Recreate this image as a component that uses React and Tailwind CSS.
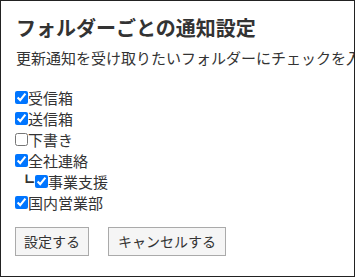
import React from 'react'

const folders = [
  { name: '受信箱', checked: true },
  { name: '送信箱', checked: true },
  { name: '下書き', checked: false },
  { name: '全社連絡', checked: true },
  { name: '事業支援', checked: true, child: true },
  { name: '国内営業部', checked: true },
]

const FolderRow = ({ folder }) => (
  <label className="flex items-center h-[21px]">
    {folder.child && <span className="text-[15px] leading-none mr-[1px] ml-[4px] text-[#333]">┗</span>}
    <input
      type="checkbox"
      defaultChecked={folder.checked}
      className="w-[13px] h-[13px] m-0 accent-[#0075ff]"
    />
    <span>{folder.name}</span>
  </label>
)

export default function App() {
  return (
    <div
      className="w-[355px] h-[277px] border border-[#222] overflow-hidden bg-white text-[#333] px-[14px] pt-[12px]"
      style={{ fontFamily: '"Noto Sans CJK JP", "Noto Sans", sans-serif' }}
    >
      <h1 className="text-[20px] font-bold leading-[30px] whitespace-nowrap pl-[1px]">フォルダーごとの通知設定</h1>
      <p className="text-[15px] leading-[22px] mt-[4px] whitespace-nowrap pl-[1px]">
        更新通知を受け取りたいフォルダーにチェックを入れてください。
      </p>
      <div className="mt-[18px] text-[15px] leading-[21px]">
        {folders.map((f) => (
          <FolderRow key={f.name} folder={f} />
        ))}
      </div>
      <div className="flex gap-[19px] mt-[14px]">
        <button className="h-[29px] px-[8px] border border-[#aaa] bg-[#f5f5f5] text-[14px] text-[#333]">設定する</button>
        <button className="h-[29px] px-[9px] border border-[#aaa] bg-[#f5f5f5] text-[14px] text-[#333]">キャンセルする</button>
      </div>
    </div>
  )
}
